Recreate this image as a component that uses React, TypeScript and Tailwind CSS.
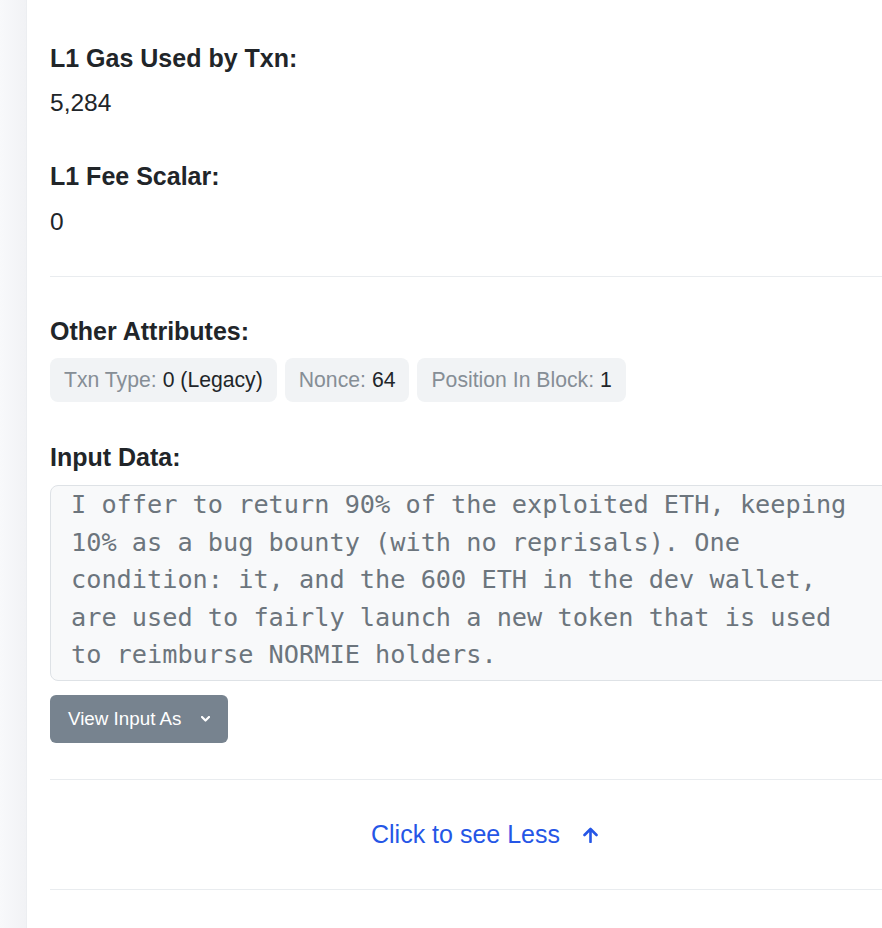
import React from "react";

const sans = { fontFamily: '"Liberation Sans", Arial, sans-serif' };

const inputLines = [
  "I offer to return 90% of the exploited ETH, keeping",
  "10% as a bug bounty (with no reprisals). One",
  "condition: it, and the 600 ETH in the dev wallet,",
  "are used to fairly launch a new token that is used",
  "to reimburse NORMIE holders.",
];

function Heading({ children, className = "" }: { children: React.ReactNode; className?: string }) {
  return (
    <h3 className={`text-[25px] leading-[30px] font-bold text-[#212529] ${className}`}>{children}</h3>
  );
}

function Value({ children, className = "" }: { children: React.ReactNode; className?: string }) {
  return <p className={`text-[24.5px] leading-[30px] text-[#212529] ${className}`}>{children}</p>;
}

function Badge({ label, value }: { label: string; value: string }) {
  return (
    <span className="inline-flex items-center h-[44px] px-[14px] rounded-lg bg-[#f1f3f5] text-[21.2px] leading-[28px]">
      <span className="text-[#868e96]">{label}:</span>
      <span className="text-[#212529] ml-[6px]">{value}</span>
    </span>
  );
}

export default function App() {
  return (
    <div className="flex w-[882px] h-[928px] overflow-hidden bg-white" style={sans}>
      {/* left rail */}
      <div className="w-[27px] shrink-0 bg-gradient-to-r from-[#f8f9fb] to-[#f1f2f5] border-r border-[#eceef1]" />

      <div className="w-[893px] shrink-0 pl-[23px]">
        <div className="pt-[43px]">
          <Heading>L1 Gas Used by Txn:</Heading>
          <Value className="mt-[15px]">5,284</Value>

          <Heading className="mt-[43px]">L1 Fee Scalar:</Heading>
          <Value className="mt-[16px]">0</Value>
        </div>

        <hr className="mt-[39px] border-0 border-t border-[#e9ecef]" />

        <Heading className="mt-[39px]">Other Attributes:</Heading>
        <div className="mt-[12px] flex gap-[8px]">
          <Badge label="Txn Type" value="0 (Legacy)" />
          <Badge label="Nonce" value="64" />
          <Badge label="Position In Block" value="1" />
        </div>

        <Heading className="mt-[40px]">Input Data:</Heading>
        <div className="mt-[13px] h-[196px] overflow-hidden rounded-lg border border-[#dee2e6] bg-[#f8f9fa] pl-[20px]">
          <div
            className="text-[25.25px] leading-[37.5px] text-[#6c757d] whitespace-pre"
            style={{ fontFamily: '"DejaVu Sans Mono", "Liberation Mono", monospace' }}
          >
            {inputLines.map((l) => (
              <div key={l}>{l}</div>
            ))}
          </div>
        </div>

        <button className="mt-[14px] flex items-center h-[48px] pl-[18px] pr-[18px] rounded-md bg-[#77838f] text-white text-[18.8px]">
          View Input As
          <svg className="ml-[20px]" width="9" height="6" viewBox="0 0 9 6" fill="none">
            <path d="M1 1l3.5 3.5L8 1" stroke="white" strokeWidth="2.2" strokeLinecap="round" strokeLinejoin="round" />
          </svg>
        </button>

        <hr className="mt-[36px] border-0 border-t border-[#e9ecef]" />

        <div className="pt-[39px] pb-[40px] flex justify-center">
          <a className="flex items-center text-[25px] leading-[30px] text-[#2556e6] cursor-pointer">
            Click to see Less
            <svg className="ml-[22px] mt-[2px]" width="17" height="16" viewBox="0 0 17 16" fill="none">
              <path d="M8.5 15V2M2.5 8l6-6 6 6" stroke="#2556e6" strokeWidth="2.6" strokeLinecap="round" strokeLinejoin="round" />
            </svg>
          </a>
        </div>

        <hr className="border-0 border-t border-[#e9ecef]" />
      </div>
    </div>
  );
}
